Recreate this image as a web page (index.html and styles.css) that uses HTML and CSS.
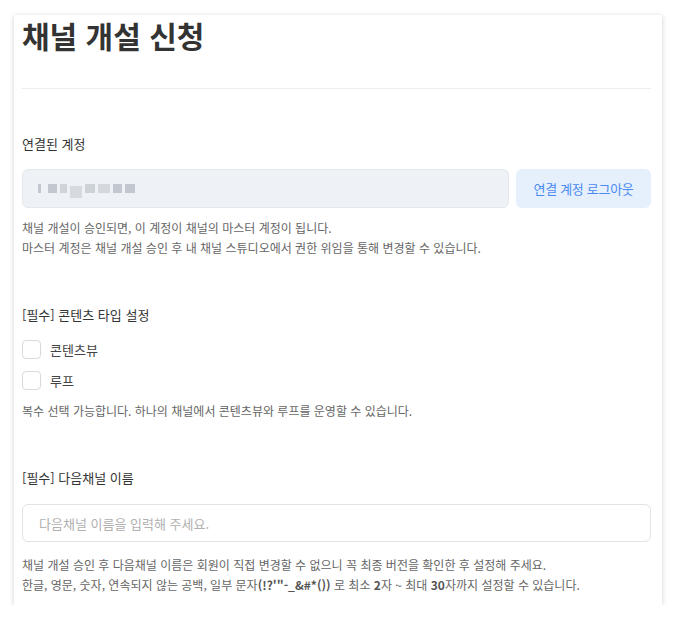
FILE: index.html
```html
<!DOCTYPE html>
<html lang="ko">
<head>
<meta charset="utf-8">
<link rel="stylesheet" href="styles.css">
</head>
<body>
<div class="card">
  <h1 class="title">채널 개설 신청</h1>
  <hr class="divider">

  <section class="section first">
    <div class="label">연결된 계정</div>
    <div class="account-row">
      <div class="account-box">
        <div class="blur">
          <span class="b b1"></span><span class="b b2"></span><span class="b b3"></span><span class="b b4"></span><span class="b b5"></span><span class="b b6"></span><span class="b b7"></span><span class="b b8"></span>
        </div>
      </div>
      <button class="logout">연결 계정 로그아웃</button>
    </div>
    <p class="help">채널 개설이 승인되면, 이 계정이 채널의 마스터 계정이 됩니다.<br>마스터 계정은 채널 개설 승인 후 내 채널 스튜디오에서 권한 위임을 통해 변경할 수 있습니다.</p>
  </section>

  <section class="section">
    <div class="label">[필수] 콘텐츠 타입 설정</div>
    <label class="check"><span class="box"></span>콘텐츠뷰</label>
    <label class="check"><span class="box"></span>루프</label>
    <p class="help">복수 선택 가능합니다. 하나의 채널에서 콘텐츠뷰와 루프를 운영할 수 있습니다.</p>
  </section>

  <section class="section">
    <div class="label">[필수] 다음채널 이름</div>
    <div class="name-input">다음채널 이름을 입력해 주세요.</div>
    <p class="help">채널 개설 승인 후 다음채널 이름은 회원이 직접 변경할 수 없으니 꼭 최종 버전을 확인한 후 설정해 주세요.<br>한글, 영문, 숫자, 연속되지 않는 공백, 일부 문자<b>(!?'"-_&amp;#*())</b> 로 최소 <b>2</b>자 ~ 최대 <b>30</b>자까지 설정할 수 있습니다.</p>
  </section>
</div>
</body>
</html>
```

FILE: styles.css
```css
* { box-sizing: border-box; }
html, body { margin: 0; padding: 0; background: #fff; }
body {
  font-family: "Noto Sans CJK KR", "Noto Sans", sans-serif;
  color: #333;
  padding: 15px 0 0 14px;
}
.card {
  width: 648px;
  height: 590px;
  background: #fff;
  box-shadow: 0 1px 5px rgba(0,0,0,0.2);
  padding: 0 11px 0 8px;
}
.title {
  margin: 0;
  font-size: 30px;
  line-height: 40px;
  font-weight: 700;
  color: #333;
}
.divider {
  border: 0;
  border-top: 1px solid #ededed;
  margin: 33px 0 0;
}
.section { padding-top: 45px; }
.section + .section { padding-top: 47px; }
.section + .section + .section { padding-top: 47px; }
.label {
  font-size: 13px;
  line-height: 20px;
  color: #333;
}
.account-row {
  display: flex;
  gap: 7px;
  margin-top: 15px;
  height: 39px;
}
.account-box {
  flex: 1;
  background: #eef1f5;
  border: 1px solid #e4e7eb;
  border-radius: 6px;
  display: flex;
  align-items: center;
  padding-left: 15px;
}
.blur { display: flex; align-items: center; gap: 3px; height: 10px; }
.b { display: block; height: 9px; background: #c3c7d0; }
.b1 { width: 3px; margin-right: 4px; }
.b2 { width: 9px; }
.b3 { width: 7px; background: #cfd3da; }
.b4 { width: 12px; background: #d6dae0; height: 12px; margin-top: 6px; }
.b5 { width: 10px; background: #cdd1d8; }
.b6 { width: 12px; background: #d4d8de; }
.b7 { width: 9px; }
.b8 { width: 10px; }
.logout {
  width: 135px;
  border: 0;
  background: #e6f0fd;
  color: #4a8af0;
  border-radius: 6px;
  font-family: inherit;
  font-size: 13px;
  letter-spacing: -0.3px;
  padding: 0;
}
.help {
  margin: 10px 0 0;
  font-size: 12px;
  line-height: 20px;
  color: #666;
}
.check {
  display: flex;
  align-items: center;
  gap: 9px;
  font-size: 13px;
  color: #444;
  height: 20px;
  margin-top: 14px;
}
.check + .check { margin-top: 11px; }
.box {
  width: 19px;
  height: 19px;
  border: 1px solid #d7dbe0;
  border-radius: 4px;
  background: #fff;
}
.check + .help { margin-top: 11px; }
.name-input {
  margin-top: 16px;
  height: 38px;
  border: 1px solid #e3e3e3;
  border-radius: 6px;
  padding-left: 16px;
  display: flex;
  align-items: center;
  font-size: 13px;
  color: #b0b0b0;
}
.name-input + .help { margin-top: 13px; }
.help b { font-weight: 700; color: #555; }
```
